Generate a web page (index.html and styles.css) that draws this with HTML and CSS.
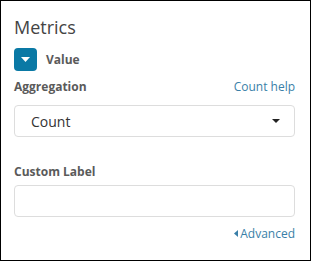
FILE: index.html
```html
<!DOCTYPE html>
<html lang="en">

<head>
    <meta charset="UTF-8">
    <meta name="viewport" content="width=device-width, initial-scale=1.0">
    <title>Metrics</title>
    <link rel="stylesheet" href="styles.css">
</head>

<body>
    <div class="panel">
        <h2 class="title">Metrics</h2>

        <!-- metric header -->
        <div class="agg-head">
            <button class="toggle" type="button">
                <svg width="9" height="5" viewBox="0 0 9 5"><path d="M0 0h9L4.5 5z" fill="#fff"/></svg>
            </button>
            <span class="agg-name">Value</span>
        </div>

        <!-- aggregation -->
        <div class="row">
            <label class="lbl">Aggregation</label>
            <a href="#" class="link">Count help</a>
        </div>
        <div class="select">
            <span>Count</span>
            <svg width="8" height="4" viewBox="0 0 8 4"><path d="M0 0h8L4 4z" fill="#222"/></svg>
        </div>

        <!-- custom label -->
        <label class="lbl lbl-custom">Custom Label</label>
        <div class="input"></div>

        <div class="adv">
            <a href="#" class="link">
                <svg width="4" height="7" viewBox="0 0 4 7"><path d="M4 0v7L0 3.5z" fill="#3a7fa8"/></svg>Advanced
            </a>
        </div>
    </div>
</body>

</html>
```

FILE: styles.css
```css
/* reset */
* {
    margin: 0;
    box-sizing: border-box;
}

body {
    font-family: "Open Sans", "Liberation Sans", sans-serif;
    background: #fff;
}

a {
    text-decoration: none;
}

.panel {
    width: 311px;
    height: 261px;
    border: 1px solid #000;
    padding: 13px 15px 0 13px;
}

.title {
    font-size: 18px;
    font-weight: 400;
    color: #444;
    line-height: 24px;
    margin-top: 1px;
}

.agg-head {
    display: flex;
    align-items: center;
    margin-top: 9px;
}

.toggle {
    width: 23px;
    height: 23px;
    padding: 0;
    border: 0;
    border-radius: 4px;
    background: #0a79a5;
    display: flex;
    align-items: center;
    justify-content: center;
}

.agg-name {
    margin-left: 9px;
    font-size: 12px;
    font-weight: 700;
    color: #5a5a5a;
}

.row {
    display: flex;
    justify-content: space-between;
    align-items: baseline;
    margin-top: 6px;
}

.lbl {
    font-size: 12px;
    font-weight: 700;
    color: #5a5a5a;
    line-height: 20px;
    display: block;
}

.link {
    font-size: 12px;
    color: #3a7fa8;
}

.select,
.input {
    height: 32px;
    border: 1px solid #ddd;
    border-radius: 4px;
    background: #fff;
}

.select {
    margin-top: 8px;
    display: flex;
    align-items: center;
    justify-content: space-between;
    padding: 0 14px 0 16px;
    font-size: 14px;
    color: #333;
}

.lbl-custom {
    margin-top: 25px;
}

.input {
    margin-top: 3px;
}

.adv {
    display: flex;
    justify-content: flex-end;
    margin-top: 8px;
}

.adv .link {
    display: flex;
    align-items: center;
    gap: 2px;
}
```
